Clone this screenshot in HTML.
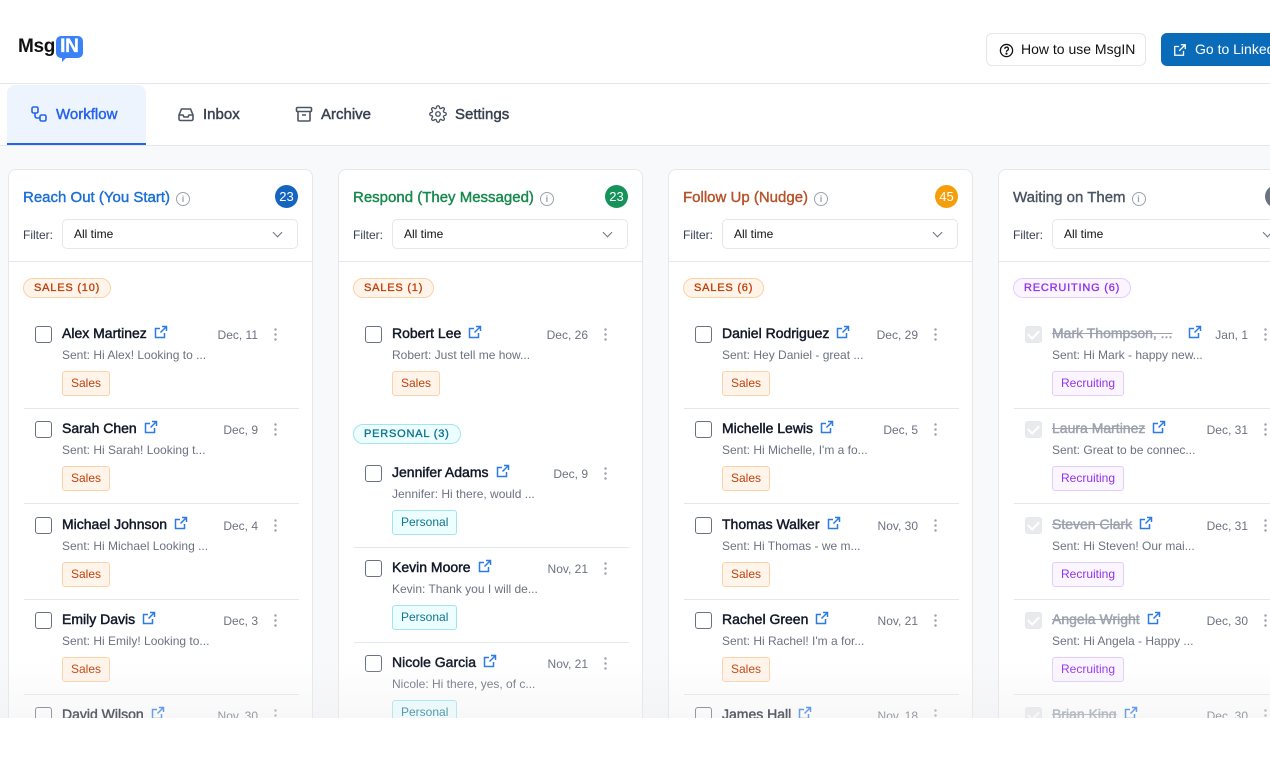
<!DOCTYPE html>
<html><head><meta charset="utf-8"><style>
*{box-sizing:border-box;margin:0;padding:0}
body{width:1270px;height:760px;overflow:hidden;background:#fff;font-family:"Liberation Sans",Arial,sans-serif;position:relative;color:#111827}
.md{-webkit-text-stroke:0.4px currentColor}
.hdr{position:absolute;left:0;top:0;width:1270px;height:84px;border-bottom:1px solid #e5e7eb;background:#fff}
.logo{position:absolute;left:18px;top:36px;font-weight:700;font-size:19px;letter-spacing:-0.3px;color:#111}
.logo span{display:inline-block;background:#3b82f6;color:#fff;border-radius:5px;padding:0 4px;margin-left:1px;height:22px;line-height:22px;position:relative;-webkit-text-stroke:0.3px #fff}
.logo span:after{content:"";position:absolute;left:6px;bottom:-4px;border-left:5px solid #3b82f6;border-bottom:5px solid transparent}
.btn1{position:absolute;left:986px;top:33px;width:160px;height:33px;border:1px solid #e5e7eb;border-radius:6px;font-size:14px;line-height:31px;padding-left:34px;color:#111}
.btn2{position:absolute;left:1161px;top:33px;width:130px;height:33px;background:#0a6cb8;border-radius:6px;font-size:14px;line-height:33px;padding-left:34px;color:#fff;white-space:nowrap}
.tabs{position:absolute;left:0;top:85px;width:1270px;height:61px;border-bottom:1px solid #e5e7eb;background:#fff}
.tab{position:absolute;top:0;height:60px;line-height:60px;font-size:15px;color:#374151;-webkit-text-stroke:0.45px currentColor}
.tab.act{left:7px;width:139px;background:#eef4fe;color:#2563eb;border-radius:8px 8px 0 0;border-bottom:2px solid #2563eb;padding-left:49px}
.tab svg{position:absolute;top:20px;-webkit-text-stroke:0}
.main{position:absolute;left:0;top:146px;width:1270px;height:572px;background:#f8f9fb;overflow:hidden}
.col{position:absolute;top:23px;width:305px;height:600px;background:#fff;border:1px solid #e5e7eb;border-radius:8px}
.ttl{position:absolute;left:14px;top:19px;font-size:15px;-webkit-text-stroke:0.4px currentColor}
.ttl i{display:inline-block;width:14px;height:14px;border:1.3px solid #9ca3af;border-radius:50%;vertical-align:0px;margin-left:6px;font-style:normal;font-size:9px;line-height:12px;text-align:center;color:#9ca3af;font-weight:700;-webkit-text-stroke:0}
.cnt{position:absolute;right:14px;top:15px;width:23px;height:23px;border-radius:50%;color:#fff;font-size:13px;line-height:23px;text-align:center}
.flt{position:absolute;left:14px;top:58px;font-size:12px;color:#374151}
.sel{position:absolute;left:53px;top:49px;width:236px;height:30px;border:1px solid #e5e7eb;border-radius:5px;font-size:12px;line-height:28px;padding-left:11px;color:#111}
.sel:after{content:"";position:absolute;right:16px;top:9px;width:6px;height:6px;border-right:1.3px solid #6b7280;border-bottom:1.3px solid #6b7280;transform:rotate(45deg)}
.div{position:absolute;left:0;right:0;top:91px;border-top:1px solid #e5e7eb}
.pill{position:absolute;left:14px;height:20px;border-radius:10px;font-size:11px;letter-spacing:0.8px;line-height:18px;padding:0 10px;-webkit-text-stroke:0.35px currentColor}
.ps{background:#fff4ea;border:1px solid #fdd2a8;color:#c2410c}
.pp{background:#ecfeff;border:1px solid #a5e4ec;color:#0e7490}
.pr{background:#faf5ff;border:1px solid #e3cdfb;color:#9333ea}
.it{position:absolute;left:0;width:305px;height:88px}
.cb{position:absolute;left:26px;top:5px;width:17px;height:17px;border:1.5px solid #6b7280;border-radius:3px}
.cb.ck{border-color:#e5e7eb;background:#e9eaec}
.cb.ck:after{content:"";position:absolute;left:4px;top:1px;width:5px;height:9px;border-right:2px solid #fff;border-bottom:2px solid #fff;transform:rotate(45deg)}
.nm{position:absolute;left:53px;top:2px;font-size:14px;line-height:20px;color:#111827;white-space:nowrap;-webkit-text-stroke:0.45px currentColor}
.nm svg{vertical-align:-1px;margin-left:7px}
.nm.st b{color:#9ca3af;text-decoration:line-through;font-weight:400}
.nm.st{color:#9ca3af}
.dt{position:absolute;right:56px;top:7px;font-size:12px;color:#6b7280}
.dots{position:absolute;left:265px;top:6px;width:3px;height:14px;background:radial-gradient(circle,#9ca3af 1.1px,transparent 1.4px) 0 0/3px 5px repeat-y}
.pv{position:absolute;left:53px;top:26px;font-size:12px;color:#6b7280;line-height:16px;white-space:nowrap}
.tg{position:absolute;left:53px;top:50px;height:25px;border-radius:3px;font-size:12px;line-height:23px;padding:0 8px}
.ln{position:absolute;left:15px;right:15px;top:87px;border-top:1px solid #e5e7eb}
.fade{position:absolute;left:0;top:660px;width:1270px;height:58px;background:linear-gradient(rgba(255,255,255,0),rgba(235,235,237,0.35))}
</style></head><body>
<div class="hdr">
<div class="logo">Msg<span>IN</span></div>
<div class="btn1"><svg style="position:absolute;left:12px;top:9px" width="15" height="15" viewBox="0 0 16 16" fill="none" stroke="#111" stroke-width="1.4"><circle cx="8" cy="8" r="6.5"/><path d="M6.2 6.3a1.9 1.9 0 1 1 2.4 1.8c-.4.2-.6.5-.6.9v.5"/><circle cx="8" cy="11.3" r=".5" fill="#111"/></svg>How to use MsgIN</div>
<div class="btn2"><svg style="position:absolute;left:12px;top:10px" width="14" height="14" viewBox="0 0 16 16" fill="none" stroke="#fff" stroke-width="1.5"><path d="M9 2h5v5M14 2L7 9M12 9v5H2V4h5"/></svg>Go to LinkedIn</div>
</div>
<div class="tabs">
<div class="tab act"><svg style="left:23px" width="18" height="18" viewBox="0 0 18 18" fill="none" stroke="#2563eb" stroke-width="1.6"><rect x="2" y="2" width="6" height="6" rx="1.5"/><rect x="10" y="10" width="6" height="6" rx="1.5"/><path d="M5 8v3a2 2 0 0 0 2 2h3"/></svg>Workflow</div>
<div class="tab" style="left:177px;padding-left:26px"><svg style="left:0" width="18" height="18" viewBox="0 0 18 18" fill="none" stroke="#4b5563" stroke-width="1.6"><path d="M2 10l2.5-6h9L16 10v4a1.5 1.5 0 0 1-1.5 1.5h-11A1.5 1.5 0 0 1 2 14z"/><path d="M2 10h4l1 2h4l1-2h4"/></svg>Inbox</div>
<div class="tab" style="left:295px;padding-left:26px"><svg style="left:0" width="18" height="18" viewBox="0 0 18 18" fill="none" stroke="#4b5563" stroke-width="1.6"><rect x="1.5" y="2.5" width="15" height="4" rx="1"/><path d="M3 6.5V15a1 1 0 0 0 1 1h10a1 1 0 0 0 1-1V6.5M7 10h4"/></svg>Archive</div>
<div class="tab" style="left:429px;padding-left:26px"><svg style="left:0" width="18" height="18" viewBox="0 0 24 24" fill="none" stroke="#4b5563" stroke-width="1.8"><circle cx="12" cy="12" r="3"/><path d="M19.4 15a1.7 1.7 0 0 0 .3 1.8l.1.1a2 2 0 1 1-2.8 2.8l-.1-.1a1.7 1.7 0 0 0-1.8-.3 1.7 1.7 0 0 0-1 1.5V21a2 2 0 1 1-4 0v-.1a1.7 1.7 0 0 0-1.1-1.5 1.7 1.7 0 0 0-1.8.3l-.1.1a2 2 0 1 1-2.8-2.8l.1-.1a1.7 1.7 0 0 0 .3-1.8 1.7 1.7 0 0 0-1.5-1H3a2 2 0 1 1 0-4h.1a1.7 1.7 0 0 0 1.5-1.1 1.7 1.7 0 0 0-.3-1.8l-.1-.1a2 2 0 1 1 2.8-2.8l.1.1a1.7 1.7 0 0 0 1.8.3H9a1.7 1.7 0 0 0 1-1.5V3a2 2 0 1 1 4 0v.1a1.7 1.7 0 0 0 1 1.5 1.7 1.7 0 0 0 1.8-.3l.1-.1a2 2 0 1 1 2.8 2.8l-.1.1a1.7 1.7 0 0 0-.3 1.8V9a1.7 1.7 0 0 0 1.5 1H21a2 2 0 1 1 0 4h-.1a1.7 1.7 0 0 0-1.5 1z"/></svg>Settings</div>
</div>
<svg width="0" height="0" style="position:absolute"><defs><g id="ext"><path d="M8 1.5h4.5V6M12.5 1.5L6.5 7.5M10.5 8v4.5h-9v-9H6" fill="none" stroke="#2a7be4" stroke-width="1.5"/></g></defs></svg>
<div class="main">
<div class="col" style="left:8px">
<div class="ttl" style="color:#1a6fd6">Reach Out (You Start)<i>i</i></div><div class="cnt" style="background:#1565c0">23</div>
<div class="flt">Filter:</div><div class="sel">All time</div><div class="div"></div>
<div class="pill ps" style="top:108px">SALES (10)</div>
<div class="it" style="top:151px"><div class="cb"></div><div class="nm">Alex Martinez<svg width="14" height="14"><use href="#ext"/></svg></div><div class="dt">Dec, 11</div><div class="dots"></div><div class="pv">Sent: Hi Alex! Looking to ...</div><div class="tg ps">Sales</div><div class="ln"></div></div>
<div class="it" style="top:246px"><div class="cb"></div><div class="nm">Sarah Chen<svg width="14" height="14"><use href="#ext"/></svg></div><div class="dt">Dec, 9</div><div class="dots"></div><div class="pv">Sent: Hi Sarah! Looking t...</div><div class="tg ps">Sales</div><div class="ln"></div></div>
<div class="it" style="top:342px"><div class="cb"></div><div class="nm">Michael Johnson<svg width="14" height="14"><use href="#ext"/></svg></div><div class="dt">Dec, 4</div><div class="dots"></div><div class="pv">Sent: Hi Michael Looking ...</div><div class="tg ps">Sales</div><div class="ln"></div></div>
<div class="it" style="top:437px"><div class="cb"></div><div class="nm">Emily Davis<svg width="14" height="14"><use href="#ext"/></svg></div><div class="dt">Dec, 3</div><div class="dots"></div><div class="pv">Sent: Hi Emily! Looking to...</div><div class="tg ps">Sales</div><div class="ln"></div></div>
<div class="it" style="top:532px"><div class="cb"></div><div class="nm">David Wilson<svg width="14" height="14"><use href="#ext"/></svg></div><div class="dt">Nov, 30</div><div class="dots"></div></div>
</div>
<div class="col" style="left:338px">
<div class="ttl" style="color:#17894d">Respond (They Messaged)<i>i</i></div><div class="cnt" style="background:#15935a">23</div>
<div class="flt">Filter:</div><div class="sel">All time</div><div class="div"></div>
<div class="pill ps" style="top:108px">SALES (1)</div>
<div class="it" style="top:151px"><div class="cb"></div><div class="nm">Robert Lee<svg width="14" height="14"><use href="#ext"/></svg></div><div class="dt">Dec, 26</div><div class="dots"></div><div class="pv">Robert: Just tell me how...</div><div class="tg ps">Sales</div></div>
<div class="pill pp" style="top:254px">PERSONAL (3)</div>
<div class="it" style="top:290px"><div class="cb"></div><div class="nm">Jennifer Adams<svg width="14" height="14"><use href="#ext"/></svg></div><div class="dt">Dec, 9</div><div class="dots"></div><div class="pv">Jennifer: Hi there, would ...</div><div class="tg pp">Personal</div><div class="ln"></div></div>
<div class="it" style="top:385px"><div class="cb"></div><div class="nm">Kevin Moore<svg width="14" height="14"><use href="#ext"/></svg></div><div class="dt">Nov, 21</div><div class="dots"></div><div class="pv">Kevin: Thank you I will de...</div><div class="tg pp">Personal</div><div class="ln"></div></div>
<div class="it" style="top:480px"><div class="cb"></div><div class="nm">Nicole Garcia<svg width="14" height="14"><use href="#ext"/></svg></div><div class="dt">Nov, 21</div><div class="dots"></div><div class="pv">Nicole: Hi there, yes, of c...</div><div class="tg pp">Personal</div></div>
</div>
<div class="col" style="left:668px">
<div class="ttl" style="color:#b4532a">Follow Up (Nudge)<i>i</i></div><div class="cnt" style="background:#f59e0b">45</div>
<div class="flt">Filter:</div><div class="sel">All time</div><div class="div"></div>
<div class="pill ps" style="top:108px">SALES (6)</div>
<div class="it" style="top:151px"><div class="cb"></div><div class="nm">Daniel Rodriguez<svg width="14" height="14"><use href="#ext"/></svg></div><div class="dt">Dec, 29</div><div class="dots"></div><div class="pv">Sent: Hey Daniel - great ...</div><div class="tg ps">Sales</div><div class="ln"></div></div>
<div class="it" style="top:246px"><div class="cb"></div><div class="nm">Michelle Lewis<svg width="14" height="14"><use href="#ext"/></svg></div><div class="dt">Dec, 5</div><div class="dots"></div><div class="pv">Sent: Hi Michelle, I'm a fo...</div><div class="tg ps">Sales</div><div class="ln"></div></div>
<div class="it" style="top:342px"><div class="cb"></div><div class="nm">Thomas Walker<svg width="14" height="14"><use href="#ext"/></svg></div><div class="dt">Nov, 30</div><div class="dots"></div><div class="pv">Sent: Hi Thomas - we m...</div><div class="tg ps">Sales</div><div class="ln"></div></div>
<div class="it" style="top:437px"><div class="cb"></div><div class="nm">Rachel Green<svg width="14" height="14"><use href="#ext"/></svg></div><div class="dt">Nov, 21</div><div class="dots"></div><div class="pv">Sent: Hi Rachel! I'm a for...</div><div class="tg ps">Sales</div><div class="ln"></div></div>
<div class="it" style="top:532px"><div class="cb"></div><div class="nm">James Hall<svg width="14" height="14"><use href="#ext"/></svg></div><div class="dt">Nov, 18</div><div class="dots"></div></div>
</div>
<div class="col" style="left:998px">
<div class="ttl" style="color:#4b5563">Waiting on Them<i>i</i></div><div class="cnt" style="background:#6b7280">12</div>
<div class="flt">Filter:</div><div class="sel">All time</div><div class="div"></div>
<div class="pill pr" style="top:108px">RECRUITING (6)</div>
<div class="it" style="top:151px"><div class="cb ck"></div><div class="nm st"><b>Mark Thompson, ...</b><svg width="14" height="14" style="margin-left:16px"><use href="#ext"/></svg></div><div class="dt">Jan, 1</div><div class="dots"></div><div class="pv">Sent: Hi Mark - happy new...</div><div class="tg pr">Recruiting</div><div class="ln"></div></div>
<div class="it" style="top:246px"><div class="cb ck"></div><div class="nm st"><b>Laura Martinez</b><svg width="14" height="14"><use href="#ext"/></svg></div><div class="dt">Dec, 31</div><div class="dots"></div><div class="pv">Sent: Great to be connec...</div><div class="tg pr">Recruiting</div><div class="ln"></div></div>
<div class="it" style="top:342px"><div class="cb ck"></div><div class="nm st"><b>Steven Clark</b><svg width="14" height="14"><use href="#ext"/></svg></div><div class="dt">Dec, 31</div><div class="dots"></div><div class="pv">Sent: Hi Steven! Our mai...</div><div class="tg pr">Recruiting</div><div class="ln"></div></div>
<div class="it" style="top:437px"><div class="cb ck"></div><div class="nm st"><b>Angela Wright</b><svg width="14" height="14"><use href="#ext"/></svg></div><div class="dt">Dec, 30</div><div class="dots"></div><div class="pv">Sent: Hi Angela - Happy ...</div><div class="tg pr">Recruiting</div><div class="ln"></div></div>
<div class="it" style="top:532px"><div class="cb ck"></div><div class="nm st"><b>Brian King</b><svg width="14" height="14"><use href="#ext"/></svg></div><div class="dt">Dec, 30</div><div class="dots"></div></div>
</div>
</div>
<div class="fade"></div>
</body></html>
